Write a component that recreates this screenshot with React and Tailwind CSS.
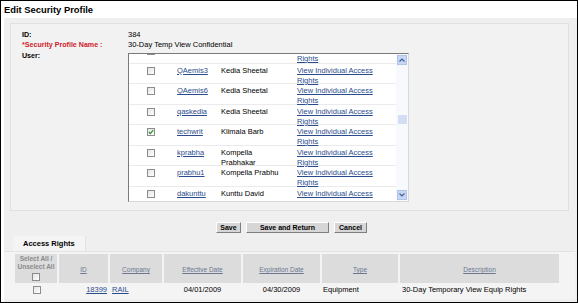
const users = [
  { login: 'QAemis3', name: 'Kedia Sheetal' },
  { login: 'QAemis6', name: 'Kedia Sheetal' },
  { login: 'qaskedia', name: 'Kedia Sheetal' },
  { login: 'techwrit', name: 'Klimala Barb', checked: true },
  { login: 'kprabha', name: 'Kompella Prabhakar' },
  { login: 'prabhu1', name: 'Kompella Prabhu' },
  { login: 'dakunttu', name: 'Kunttu David' },
];

function Box({ checked }) {
  return (
    <div className="w-[8px] h-[8px] border border-[#8c8c8c] bg-gradient-to-br from-[#e4e4e4] to-white flex items-center justify-center">
      {checked && (
        <svg width="6" height="6" viewBox="0 0 6 6">
          <path d="M0.8 3 L2.4 4.6 L5.2 1.2" stroke="#2f8a2f" strokeWidth="1.2" fill="none" />
        </svg>
      )}
    </div>
  );
}

function Arrow({ up }) {
  return (
    <div className="w-[10px] h-[10px] bg-[#c9d8f2] border border-[#b0c4e8] flex items-center justify-center">
      <svg width="6" height="4" viewBox="0 0 6 4">
        <path d={up ? 'M0.5 3.5 L3 1 L5.5 3.5' : 'M0.5 0.5 L3 3 L5.5 0.5'} stroke="#3d5f9e" strokeWidth="1.2" fill="none" />
      </svg>
    </div>
  );
}

function Btn({ children, w }) {
  return (
    <div className={`${w} h-[11px] bg-[#d6d6d6] border border-t-white border-l-white border-r-[#7e7e7e] border-b-[#7e7e7e] flex items-center justify-center font-bold text-[7px]`}>
      {children}
    </div>
  );
}

export default function App() {
  return (
    <div className="w-[578px] h-[303px] border border-black bg-white overflow-hidden font-['Liberation_Sans',Arial,sans-serif] text-[7.5px] leading-[10px] text-black">
      <div className="h-[17px] pl-[3px] pt-[3px] text-[9.4px] leading-[12px] font-bold">Edit Security Profile</div>

      <div className="ml-[3px] h-[284px] bg-[#efefef] flex flex-col">
        {/* profile details */}
        <div className="mt-[5px] ml-[6px] mr-[8px] h-[188px] border border-[#e0e0e0] bg-[#f2f2f2] pt-[6px] pl-[11px]">
          <div className="flex h-[10px]">
            <div className="w-[106px] font-bold text-[7.1px]">ID:</div>
            <div>384</div>
          </div>
          <div className="flex h-[10px]">
            <div className="w-[106px] font-bold text-[7.1px] text-[#d0202a]">*Security Profile Name :</div>
            <div>30-Day Temp View Confidential</div>
          </div>
          <div className="flex">
            <div className="w-[106px] font-bold text-[7.1px] pt-[1px]">User:</div>
            <div className="mt-[3px] w-[281px] h-[149px] border border-t-[#7a7a7a] border-l-[#7a7a7a] border-r-[#d8d8d8] border-b-[#d8d8d8] bg-white flex overflow-hidden">
              <div className="flex-1 overflow-hidden">
                {/* row scrolled partly out of view: only its last line shows */}
                <div className="h-[9.5px] border-b border-[#ebebeb] flex">
                  <div className="w-[168px] pl-[18px] h-[2px] overflow-hidden">
                    <div className="-mt-[7px]"><Box /></div>
                  </div>
                  <div className="text-[#2a4c8c] underline">Rights</div>
                </div>
                {users.map((u, i) => (
                  <div key={i} className="h-[20.5px] border-b border-[#ebebeb] flex pt-[2px]">
                    <div className="w-[48px] pl-[18px] pt-[1px]">
                      <Box checked={u.checked} />
                    </div>
                    <div className="w-[44px] text-[#2a4c8c] underline">{u.login}</div>
                    <div className="w-[76px] pr-[10px]">{u.name}</div>
                    <div className="w-[86px] text-[#2a4c8c] underline">View Individual Access Rights</div>
                  </div>
                ))}
              </div>
              <div className="w-[12px] bg-[#f7f9fc] flex flex-col items-center pt-[1px] pb-[1px]">
                <Arrow up />
                <div className="flex-1 flex flex-col items-center pt-[50px]">
                  <div className="w-[9px] h-[9px] bg-[#d2def4]" />
                </div>
                <Arrow />
              </div>
            </div>
          </div>
        </div>

        {/* buttons */}
        <div className="flex justify-center gap-[5px] mt-[11px] pl-[2px]">
          <Btn w="w-[25px]">Save</Btn>
          <Btn w="w-[83px]">Save and Return</Btn>
          <Btn w="w-[33px]">Cancel</Btn>
        </div>

        {/* access rights tab */}
        <div className="mt-[3px] ml-[9px] w-[73px] h-[15px] bg-[#f4f4f4] border-r border-[#e2e2e2] flex items-center pl-[10px] font-bold">
          Access Rights
        </div>
        <div className="h-[48px] mr-[2px] border-t border-[#e2e2e2] bg-[#f4f4f4] pt-[2px] pl-[11px]">
          <div className="grid grid-cols-[42px_49px_52px_77px_77px_76px_159px] gap-x-[2px]">
            <div className="h-[29px] bg-[#dcdcdc] flex flex-col items-center pt-[1px] text-[6.5px] leading-[8px] font-bold text-[#8a8a8a]">
              <div>Select All /</div>
              <div>Unselect All</div>
              <div className="mt-[2px]"><Box /></div>
            </div>
            {['ID', 'Company', 'Effective Date', 'Expiration Date', 'Type', 'Description'].map((h) => (
              <div key={h} className="h-[29px] bg-[#dcdcdc] flex items-center justify-center pt-[3px] text-[6.5px] text-[#6a7892] underline">
                {h}
              </div>
            ))}
            <div className="h-[14px] flex items-center justify-center pl-[2px]"><Box /></div>
            <div className="h-[14px] flex items-center justify-end pr-[1px] text-[#2a4c8c] underline">18399</div>
            <div className="h-[14px] flex items-center pl-[2px] text-[#2a4c8c] underline">RAIL</div>
            <div className="h-[14px] flex items-center justify-center">04/01/2009</div>
            <div className="h-[14px] flex items-center justify-center">04/30/2009</div>
            <div className="h-[14px] flex items-center pl-[1px]">Equipment</div>
            <div className="h-[14px] flex items-center pl-[2px]">30-Day Temporary View Equip Rights</div>
          </div>
        </div>
      </div>
    </div>
  );
}
